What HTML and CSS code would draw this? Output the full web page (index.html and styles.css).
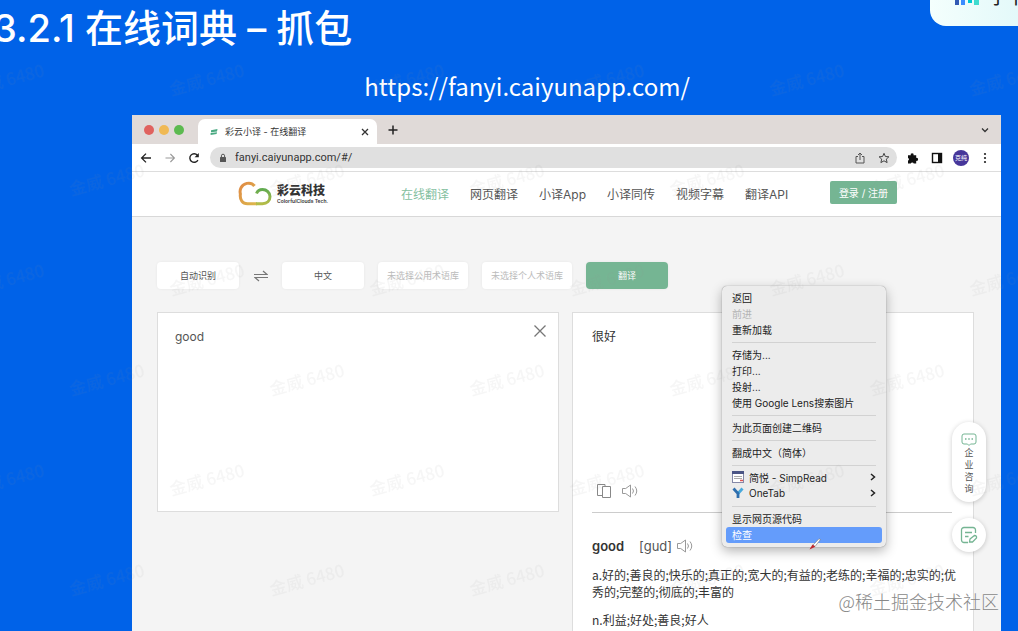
FILE: index.html
```html
<!DOCTYPE html>
<html lang="zh-CN">
<head>
  <meta charset="UTF-8" />
  <meta name="viewport" content="width=device-width, initial-scale=1.0" />
  <title>3.2.1 在线词典 – 抓包</title>
  <link rel="stylesheet" href="styles.css">
</head>
<body>
  <header class="slide-header">
    <h1>3.2.1 在线词典 – 抓包</h1>
    <p class="slide-url">https://fanyi.caiyunapp.com/</p>
  </header>

  <div class="brand-card">
    <svg width="26" height="20" viewBox="0 0 26 20" aria-hidden="true">
      <rect x="1" y="2" width="4" height="17" fill="#325ab4" />
      <rect x="7" y="9" width="4" height="10" fill="#3c8cff" />
      <rect x="14" y="7" width="4" height="10" fill="#00c8d2" />
      <rect x="20" y="1" width="5" height="18" fill="#3fdccf" />
    </svg>
    <span>字节跳动</span>
  </div>

  <main class="browser">
    <div class="tab-bar">
      <div class="lights">
        <span class="light red"></span>
        <span class="light yellow"></span>
        <span class="light green"></span>
      </div>
      <div class="tab">
        <svg width="8" height="8" viewBox="0 0 8 8" aria-hidden="true">
          <path d="M1 2.2 7.5 1 7 3.5 1 4.3zM.6 5 7 4.2 6.6 6 .6 7z" fill="#4aa982" />
        </svg>
        <span class="tab-title">彩云小译 - 在线翻译</span>
        <button class="icon-btn" aria-label="关闭标签页">
          <svg width="8" height="8" viewBox="0 0 8 8"><path d="M1 1l6 6M7 1 1 7" stroke="#333" stroke-width="1.3" /></svg>
        </button>
      </div>
      <button class="icon-btn" aria-label="新标签页">
        <svg width="10" height="10" viewBox="0 0 10 10"><path d="M5 .5v9M.5 5h9" stroke="#222" stroke-width="1.5" /></svg>
      </button>
      <button class="icon-btn tab-search" aria-label="搜索标签页">
        <svg width="8" height="8" viewBox="0 0 8 8"><path d="M1 2.5l3 3 3-3" fill="none" stroke="#333" stroke-width="1.3" /></svg>
      </button>
    </div>

    <div class="toolbar">
      <button class="icon-btn" aria-label="后退">
        <svg width="12" height="12" viewBox="0 0 12 12"><path d="M11 6H1.8M6 1.6 1.6 6 6 10.4" fill="none" stroke="#222" stroke-width="1.3" /></svg>
      </button>
      <button class="icon-btn" aria-label="前进">
        <svg width="12" height="12" viewBox="0 0 12 12"><path d="M1.5 6h9M6.4 2l4 4-4 4" fill="none" stroke="#999" stroke-width="1.1" /></svg>
      </button>
      <button class="icon-btn" aria-label="重新加载">
        <svg width="12" height="12" viewBox="0 0 12 12"><path d="M9.9 8.1A4.3 4.3 0 1 1 9.4 3.2" fill="none" stroke="#222" stroke-width="1.4" /><path d="M10.8 1v4.2H6.6z" fill="#222" /></svg>
      </button>
      <div class="address">
        <svg width="8" height="10" viewBox="0 0 8 10" aria-hidden="true"><rect x="1" y="4" width="6" height="5" rx=".6" fill="#555" /><path d="M2.4 4V2.8a1.6 1.6 0 0 1 3.2 0V4" fill="none" stroke="#555" /></svg>
        <input type="text" aria-label="地址" value="fanyi.caiyunapp.com/#/">
        <button class="icon-btn" aria-label="分享">
          <svg width="12" height="12" viewBox="0 0 12 12"><path d="M4 4.5H2V11h8V4.5H8M6 8V1.2M4 3l2-2 2 2" fill="none" stroke="#555" /></svg>
        </button>
        <button class="icon-btn" aria-label="收藏">
          <svg width="12" height="12" viewBox="0 0 12 12"><path d="M6 1.3 7.4 4.5l3.5.3-2.6 2.3.8 3.5L6 8.8l-3.1 1.8.8-3.5L1.1 4.8l3.5-.3z" fill="none" stroke="#444" /></svg>
        </button>
      </div>
      <button class="icon-btn" aria-label="扩展程序">
        <svg width="12" height="12" viewBox="0 0 12 12"><path d="M1 3.2h2.7a1.5 1.5 0 1 1 2.9 0H9.2v2.7a1.5 1.5 0 1 1 0 2.9V11.5H6.700a1.5 1.5 0 0 0-2.9 0H1V8.700a1.5 1.5 0 0 0 0-2.8z" fill="#111" /></svg>
      </button>
      <button class="icon-btn" aria-label="侧边栏">
        <svg width="12" height="12" viewBox="0 0 12 12"><rect x="1.5" y="1.5" width="9" height="9" fill="none" stroke="#111" stroke-width="1.4" /><path d="M7 1.5h3.500v9H7z" fill="#111" /></svg>
      </button>
      <button class="avatar" aria-label="个人资料">克纯</button>
      <button class="icon-btn" aria-label="更多">
        <svg width="12" height="12" viewBox="0 0 12 12" fill="#222"><circle cx="6" cy="2" r="1.1" /><circle cx="6" cy="6" r="1.1" /><circle cx="6" cy="10" r="1.1" /></svg>
      </button>
    </div>

    <nav class="site-nav">
      <a class="logo" href="#/" aria-label="彩云科技">
        <svg width="36" height="26" viewBox="0 0 36 26" aria-hidden="true">
          <defs>
            <linearGradient id="orange" x1="0" y1="0" x2="1" y2="1">
              <stop offset="0" stop-color="#e08a45" />
              <stop offset="1" stop-color="#dcb84c" />
            </linearGradient>
            <linearGradient id="green" x1="0" y1="0" x2="0" y2="1">
              <stop offset="0" stop-color="#62ab50" />
              <stop offset="1" stop-color="#b4bc48" />
            </linearGradient>
          </defs>
          <path d="M17.5 5C15.5 2.400 12.500 1.800 9.800 2.400 4.500 3.600 2.200 8.500 3.400 13c-.8 6 2.200 9.700 7 9.700H20" fill="none" stroke="url(#orange)" stroke-width="3" />
          <path d="M19.5 12.5c1-2.500 3.300-3.900 6-3.900 4.200 0 7.500 3 7.500 6.900 0 4.200-3 7.200-7.500 7.200H19" fill="none" stroke="url(#green)" stroke-width="3" />
        </svg>
        <span class="logo-text">
          <strong>彩云科技</strong>
          <small>ColorfulClouds Tech.</small>
        </span>
      </a>
      <div class="nav-links">
        <a class="active" href="#/">在线翻译</a>
        <a href="#/web">网页翻译</a>
        <a href="#/app">小译App</a>
        <a href="#/interpret">小译同传</a>
        <a href="#/video">视频字幕</a>
        <a href="#/api">翻译API</a>
      </div>
      <button class="login">登录 / 注册</button>
    </nav>

    <div class="page">
      <div class="controls">
        <button class="option">自动识别</button>
        <button class="icon-btn swap" aria-label="交换语言">
          <svg width="14" height="12" viewBox="0 0 14 12"><path d="M0 4.5h13L9 1M14 7.5H1L5 11" fill="none" stroke="#777" stroke-width="1.2" /></svg>
        </button>
        <button class="option">中文</button>
        <button class="option glossary">未选择公用术语库</button>
        <button class="option glossary">未选择个人术语库</button>
        <button class="option translate">翻译</button>
      </div>

      <div class="panels">
        <section class="panel source">
          <textarea aria-label="原文">good</textarea>
          <button class="icon-btn" aria-label="清空">
            <svg width="14" height="14" viewBox="0 0 14 14"><path d="M1.5 1.5l11 11M12.5 1.5l-11 11" stroke="#777" stroke-width="1.3" /></svg>
          </button>
        </section>

        <section class="panel target">
          <div class="result">
            <p>很好</p>
            <div class="result-actions">
              <button class="icon-btn" aria-label="复制">
                <svg width="16" height="16" viewBox="0 0 16 16"><path d="M6 12.500H1.500v-11H9V4M6.500 3.500h8v11h-8z" fill="none" stroke="#888" /></svg>
              </button>
              <button class="icon-btn" aria-label="朗读">
                <svg width="16" height="16" viewBox="0 0 16 16"><path d="M.5 5.5h3.2L8.5 2v12L3.700 10.5H.5zM10.500 5.500q2 2.500 0 5M13 3.500q3.500 4.500 0 9" fill="none" stroke="#999" /></svg>
              </button>
            </div>
          </div>
          <div class="dictionary">
            <h2>good <span>[gud]</span>
              <button class="icon-btn" aria-label="播放发音">
                <svg width="16" height="16" viewBox="0 0 16 16"><path d="M.5 5.5h3.2L8.5 2v12L3.700 10.5H.5zM10.500 5.500q2 2.500 0 5M13 3.500q3.500 4.500 0 9" fill="none" stroke="#999" /></svg>
              </button>
            </h2>
            <p>a.好的;善良的;快乐的;真正的;宽大的;有益的;老练的;幸福的;忠实的;优秀的;完整的;彻底的;丰富的</p>
            <p>n.利益;好处;善良;好人</p>
          </div>
        </section>
      </div>
    </div>

    <div class="floating">
      <button class="consult">
        <svg width="16" height="14" viewBox="0 0 16 14" aria-hidden="true"><path d="M3 1h10a2 2 0 0 1 2 2v6a2 2 0 0 1-2 2H9.500L8 12.500 6.500 11H3a2 2 0 0 1-2-2V3a2 2 0 0 1 2-2z" fill="none" stroke="#75b593" /><path d="M4 6h1.500M7.250 6h1.500M10.500 6H12" stroke="#75b593" stroke-width="1.4" /></svg>
        <span>企业咨询</span>
      </button>
      <button class="feedback" aria-label="反馈">
        <svg width="18" height="18" viewBox="0 0 18 18"><path d="M8 16.500H4A2.500 2.500 0 0 1 1.500 14V4A2.500 2.500 0 0 1 4 1.500h9A2.500 2.500 0 0 1 15.500 4v3M5 6.500h7M5 10.500h3.500M10 13l4.500-3.500q2.500 0 2 2.500L12.500 16H9.500z" fill="none" stroke="#75b593" stroke-width="1.3" /></svg>
      </button>
    </div>
  </main>

  <div class="context-menu" role="menu">
    <button role="menuitem">返回</button>
    <button role="menuitem" disabled>前进</button>
    <button role="menuitem">重新加载</button>
    <hr>
    <button role="menuitem">存储为...</button>
    <button role="menuitem">打印...</button>
    <button role="menuitem">投射...</button>
    <button role="menuitem">使用 Google Lens搜索图片</button>
    <hr>
    <button role="menuitem">为此页面创建二维码</button>
    <hr>
    <button role="menuitem">翻成中文（简体）</button>
    <hr>
    <button role="menuitem">
      <svg width="12" height="12" viewBox="0 0 12 12" aria-hidden="true"><rect x=".5" y=".5" width="11" height="11" fill="#fff" stroke="#8589a8" /><path d="M0 0h12v3H0z" fill="#4b5585" /><path d="M2 5.500h8M2 7.500h8" stroke="#aaa" /><path d="M8 9.500h3" stroke="#d55" stroke-width="1.5" /></svg>
      <span>简悦 - SimpRead</span>
      <svg class="arrow" width="6" height="8" viewBox="0 0 6 8" aria-hidden="true"><path d="M1 1l3.500 3L1 7" fill="none" stroke="#222" stroke-width="1.5" /></svg>
    </button>
    <button role="menuitem">
      <svg width="12" height="12" viewBox="0 0 12 12" aria-hidden="true"><path d="M10.500 1.500 6 6.500" fill="none" stroke="#48a9dc" stroke-width="2.800" /><path d="M1.500 1.500 6 6.500V11" fill="none" stroke="#2f6fae" stroke-width="2.800" /></svg>
      <span>OneTab</span>
      <svg class="arrow" width="6" height="8" viewBox="0 0 6 8" aria-hidden="true"><path d="M1 1l3.500 3L1 7" fill="none" stroke="#222" stroke-width="1.5" /></svg>
    </button>
    <hr>
    <button role="menuitem">显示网页源代码</button>
    <button role="menuitem" class="selected">检查</button>
  </div>

  <svg class="brush" width="12" height="12" viewBox="0 0 12 12" aria-hidden="true">
    <path d="M4 7 10 .8 11.500 1.500 6 8.500z" fill="#fff" stroke="#777" stroke-width=".6" />
    <path d="M.5 11.500 3.500 6.500 6.300 8.800z" fill="#c1272d" />
  </svg>

  <svg class="watermark" width="100%" height="100%" aria-hidden="true">
    <defs>
      <pattern id="mark" width="200" height="200" patternUnits="userSpaceOnUse">
        <text x="7" y="86" transform="rotate(-15 7 80)">金威 6480</text>
        <text x="207" y="86" transform="rotate(-15 207 80)">金威 6480</text>
        <text x="107" y="186" transform="rotate(-15 107 180)">金威 6480</text>
      </pattern>
    </defs>
    <rect width="100%" height="100%" fill="url(#mark)" />
  </svg>
  <p class="credit">@稀土掘金技术社区</p>
</body>
</html>
```
FILE: styles.css
```css
* {
  box-sizing: border-box;
}
body {
  font-family: Inter, "Noto Sans CJK SC", sans-serif;
  margin: 0;
  height: 100vh;
  display: flex;
  flex-direction: column;
  position: relative;
  overflow: hidden;
  background-color: #0062e8;
  color: #333;
}
button {
  font-family: inherit;
  border: none;
  padding: 0;
  cursor: pointer;
}
svg {
  display: block;
  flex: none;
}
.icon-btn {
  display: flex;
  align-items: center;
  justify-content: center;
  background: none;
}

/* slide heading */
.slide-header {
  flex: none;
  color: #fff;
}
.slide-header h1 {
  margin: 0 0 0 -7px;
  font-size: 38px;
  font-weight: 500;
  line-height: 56px;
}
.slide-url {
  margin: 10px 0 9px;
  padding-left: 36px;
  font-family: "Noto Sans CJK SC", sans-serif;
  font-size: 24px;
  line-height: 40px;
  text-align: center;
}
.brand-card {
  position: absolute;
  top: -30px;
  right: -40px;
  width: 128px;
  height: 56px;
  padding: 16px 0 0 24px;
  display: flex;
  gap: 8px;
  border-radius: 16px;
  background: linear-gradient(90deg, #f4fffd, #dcf6f8);
  color: #222;
  font-size: 20px;
  line-height: 22px;
  white-space: nowrap;
}

/* browser window */
.browser {
  flex: 1;
  min-height: 0;
  margin: 0 17px 0 132px;
  display: flex;
  flex-direction: column;
  position: relative;
  background-color: #f4f4f4;
}
.tab-bar {
  flex: none;
  display: flex;
  align-items: center;
  height: 29px;
  padding: 0 12px;
  background-color: #e0dad8;
}
.lights {
  display: flex;
  gap: 5px;
  width: 54px;
}
.light {
  width: 10px;
  height: 10px;
  border-radius: 50%;
}
.red {
  background-color: #e0625f;
}
.yellow {
  background-color: #f0b954;
}
.green {
  background-color: #5cba50;
}
.tab {
  display: flex;
  align-items: center;
  gap: 7px;
  width: 179px;
  height: 25px;
  margin: 4px 11px 0 0;
  padding: 0 8px 0 12px;
  border-radius: 7px 7px 0 0;
  background-color: #fff;
}
.tab-title {
  flex: 1;
  font-size: 9px;
}
.tab-search {
  margin-left: auto;
}
.toolbar {
  flex: none;
  display: flex;
  align-items: center;
  gap: 12px;
  height: 28px;
  padding: 0 10px 0 8px;
  border-bottom: 1px solid #ddd;
  background-color: #fff;
}
.address {
  flex: 1;
  display: flex;
  align-items: center;
  gap: 12px;
  height: 21px;
  margin: 0 -2px;
  padding: 0 7px 0 9px;
  border-radius: 11px;
  background-color: #e0e0e0;
}
.address input {
  flex: 1;
  min-width: 0;
  margin-left: -4px;
  padding: 0;
  border: none;
  background: none;
  color: #333;
  font-family: Roboto, sans-serif;
  font-size: 11px;
}
.avatar {
  width: 16px;
  height: 16px;
  margin: 0 -2px;
  border-radius: 50%;
  background-color: #46369a;
  color: #fff;
  font-size: 6px;
}

/* site header */
.site-nav {
  flex: none;
  display: flex;
  align-items: center;
  height: 45px;
  padding: 0 104px 0 105px;
  border-bottom: 1px solid #d8d8d8;
  background-color: #fff;
}
.logo {
  display: flex;
  align-items: center;
  gap: 4px;
  width: 164px;
  color: #333;
  text-decoration: none;
}
.logo-text {
  display: flex;
  flex-direction: column;
}
.logo-text strong {
  font-size: 12px;
  font-weight: 900;
  line-height: 14px;
}
.logo-text small {
  font-size: 5px;
  font-weight: 600;
  line-height: 7px;
}
.nav-links {
  display: flex;
  gap: 21px;
  padding-top: 2px;
}
.nav-links a {
  color: #555;
  font-size: 12px;
  line-height: 18px;
  text-decoration: none;
  white-space: nowrap;
}
.nav-links .active {
  color: #84c09f;
}
.login {
  width: 67px;
  height: 23px;
  margin: 0 0 4px auto;
  border-radius: 2px;
  background-color: #75b593;
  color: #fff;
  font-size: 10px;
}

/* translator */
.page {
  flex: 1;
  min-height: 0;
  display: flex;
  flex-direction: column;
  padding: 45px 27px 0 25px;
}
.controls {
  flex: none;
  display: flex;
  gap: 14px;
  margin-bottom: 23px;
}
.option {
  width: 82px;
  height: 27px;
  border-radius: 4px;
  background-color: #fff;
  box-shadow: 0 0 3px rgba(0,0,0,0.06);
  color: #555;
  font-size: 9px;
  white-space: nowrap;
}
.swap {
  width: 15px;
}
.glossary {
  width: 90px;
  color: #bbb;
}
.translate {
  background-color: #75b593;
  color: #fff;
}
.panels {
  flex: 1;
  min-height: 0;
  display: grid;
  grid-template-columns: 1fr 1fr;
  align-items: start;
  gap: 13px;
}
.panel {
  border: 1px solid #ddd;
  background-color: #fff;
}
.source {
  display: flex;
  align-items: flex-start;
  height: 200px;
  padding: 11px 11px 12px 17px;
}
.source textarea {
  flex: 1;
  height: 100%;
  padding: 3px 0;
  border: none;
  resize: none;
  color: #555;
  font-family: inherit;
  font-size: 12px;
  line-height: 20px;
}
.target {
  align-self: stretch;
  padding: 0 9px 0 19px;
}
.result {
  display: flex;
  flex-direction: column;
  justify-content: space-between;
  height: 200px;
  margin-right: 12px;
  padding: 15px 0 13px;
  border-bottom: 1px solid #ccc;
}
.result p {
  margin: 0;
  font-size: 12px;
  line-height: 18px;
}
.result-actions {
  display: flex;
  gap: 10px;
  padding-left: 4px;
}
.dictionary h2 {
  display: flex;
  align-items: center;
  margin: 24px 0 11px;
  font-size: 13px;
  font-weight: 600;
  line-height: 18px;
}
.dictionary h2 span {
  margin: 0 5px 0 15px;
  color: #555;
  font-weight: 400;
}
.dictionary p {
  margin: 0 0 11px;
  font-family: "Noto Sans CJK SC", sans-serif;
  font-size: 12px;
  line-height: 17px;
}

/* buttons over the right edge */
.floating {
  position: absolute;
  top: 307px;
  right: 15px;
  display: flex;
  flex-direction: column;
  gap: 16px;
}
.consult,
.feedback {
  display: flex;
  flex-direction: column;
  align-items: center;
  justify-content: center;
  width: 34px;
  border-radius: 17px;
  background-color: #fff;
  box-shadow: 0 1px 5px rgba(0,0,0,0.2);
}
.consult {
  height: 80px;
  padding-top: 4px;
  color: #555;
  font-size: 9px;
  line-height: 12px;
}
.consult span {
  width: 9px;
}
.feedback {
  height: 34px;
}

/* context menu */
.context-menu {
  position: absolute;
  top: 286px;
  left: 722px;
  width: 164px;
  padding: 4px;
  border-radius: 5px;
  background-color: #ececec;
  box-shadow: 0 0 1px rgba(0,0,0,0.5), 0 4px 12px rgba(0,0,0,0.3);
}
.context-menu button {
  display: flex;
  align-items: center;
  gap: 5px;
  width: 100%;
  height: 16px;
  padding: 0 6px 2px;
  border-radius: 3px;
  background: none;
  color: #222;
  font-size: 10px;
  white-space: nowrap;
}
.context-menu button:disabled {
  color: #b4b4b4;
}
.context-menu .selected {
  background-color: #649cfb;
  color: #fff;
}
.context-menu .arrow {
  margin-left: auto;
}
.context-menu hr {
  height: 1px;
  margin: 4px 6px;
  border: none;
  background-color: #d2d2d2;
}
.brush {
  position: absolute;
  top: 538px;
  left: 809px;
}

/* overlays */
.watermark {
  position: absolute;
  inset: 0;
  pointer-events: none;
}
.watermark text {
  fill: #888;
  fill-opacity: 0.08;
  font-family: "Noto Sans CJK SC", sans-serif;
  font-size: 17px;
  font-weight: 500;
  text-anchor: middle;
}
.credit {
  position: absolute;
  right: 19px;
  bottom: 17px;
  margin: 0;
  color: #888;
  font-family: "Noto Sans CJK SC", sans-serif;
  font-size: 18px;
  font-weight: 300;
  line-height: 26px;
  text-shadow: 0 0 1px #fff;
}
```
